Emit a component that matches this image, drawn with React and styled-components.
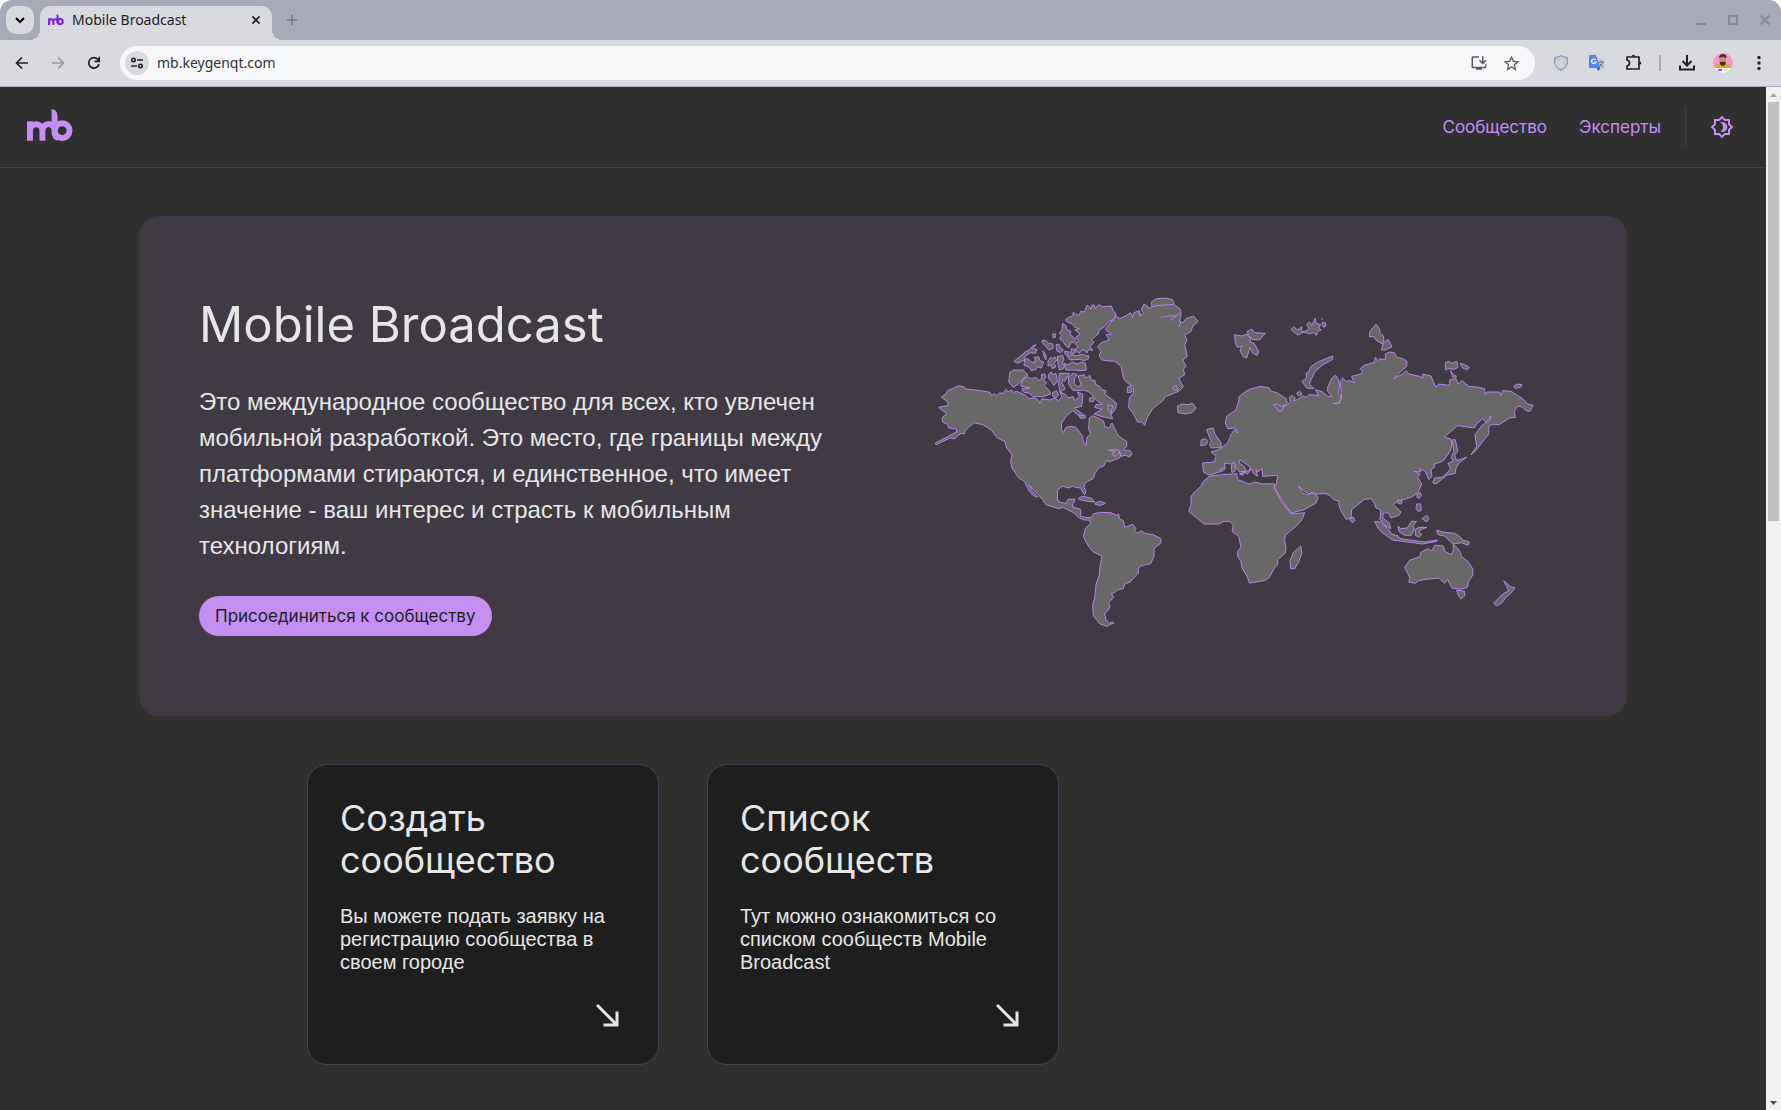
import React from 'react';
import styled, { createGlobalStyle } from 'styled-components';
import { MdOutlineInstallDesktop, MdStarBorder, MdSouthEast, MdOutlineBrightness4 } from 'react-icons/md';

const sans = '"Liberation Sans", Arial, sans-serif';
const chromeFont = '"Noto Sans", "Open Sans", sans-serif';
const display = 'Inter, "Noto Sans", sans-serif';

const GlobalStyle = createGlobalStyle`
  *, *::before, *::after { box-sizing: border-box; }
  body { margin: 0; background: #ffffff; font-family: ${sans}; }
  h1, h2, p { margin: 0; font-weight: 400; }
  a { color: inherit; text-decoration: none; }
  button { border: 0; padding: 0; background: none; font: inherit; color: inherit; cursor: pointer; }
  svg { display: block; flex: none; }
`;

const Window = styled.div`
  display: flex;
  flex-direction: column;
  height: 100vh;
  overflow: hidden;
`;

const TabStrip = styled.div`
  display: flex;
  align-items: center;
  flex: none;
  height: 40px;
  padding-left: 6px;
  background: #a8aab7;
  border-radius: 12px 12px 0 0;
`;

const TabSearch = styled.button`
  display: grid;
  place-items: center;
  width: 28px;
  height: 28px;
  margin-right: 6px;
  border-radius: 10px;
  background: #d9dae0;
`;

const Tab = styled.div`
  position: relative;
  display: flex;
  align-items: center;
  align-self: flex-end;
  width: 232px;
  height: 34px;
  padding: 0 6px 6px 8px;
  border-radius: 10px 10px 0 0;
  background: #d9dae0;
  color: #1f2023;
  font: 14px/20px ${chromeFont};

  &::before, &::after {
    content: '';
    position: absolute;
    bottom: 0;
    width: 10px;
    height: 10px;
  }
  &::before { right: 100%; background: radial-gradient(circle at 0 0, transparent 10px, #d9dae0 10px); }
  &::after { left: 100%; background: radial-gradient(circle at 100% 0, transparent 10px, #d9dae0 10px); }
`;

const TabTitle = styled.span`
  flex: 1;
  padding-left: 8px;
`;

const IconButton = styled.button`
  display: grid;
  place-items: center;
  flex: none;
  width: ${(p) => p.$size || 36}px;
  height: ${(p) => p.$size || 36}px;
  color: ${(p) => p.$color || '#1f2023'};
`;

const WindowControls = styled.div`
  display: flex;
  margin-left: auto;
`;

const Toolbar = styled.div`
  display: flex;
  align-items: center;
  flex: none;
  height: 47px;
  padding: 0 4px;
  border-bottom: 1px solid #a8aab7;
  background: #d9dae0;
`;

const AddressBar = styled.label`
  display: flex;
  align-items: center;
  flex: 1;
  height: 34px;
  margin: 0 8px;
  padding: 0 8px 0 5px;
  border-radius: 17px;
  background: #f5f7f9;
  color: #5a5c60;
`;

const SiteChip = styled.span`
  display: grid;
  place-items: center;
  width: 24px;
  height: 24px;
  border-radius: 50%;
  background: #d9dae0;
`;

const AddressInput = styled.input`
  flex: 1;
  min-width: 0;
  padding: 0 0 0 8px;
  border: 0;
  outline: 0;
  background: transparent;
  color: #303236;
  font: 14px/20px ${chromeFont};
`;

const ToolbarDivider = styled.span`
  width: 2px;
  height: 16px;
  margin: 0 8px;
  background: #a8aab7;
`;

const Viewport = styled.div`
  display: flex;
  flex: 1;
  min-height: 0;
`;

const Page = styled.div`
  flex: 1;
  min-width: 0;
  overflow: hidden;
  background: #303030;
  color: #e6e6e6;
`;

const Header = styled.header`
  display: flex;
  align-items: center;
  justify-content: space-between;
  height: 81px;
  padding: 0 32px 0 27px;
  border-bottom: 1px solid #43404a;
  color: #c58ff2;
`;

const HomeLink = styled.a`
  padding-bottom: 4px;
`;

const Nav = styled.nav`
  display: flex;
  align-items: center;
  gap: 32px;
  font: 17px/24px ${display};
`;

const NavActions = styled.div`
  display: flex;
  align-items: center;
  height: 40px;
  margin-left: -8px;
  padding-left: 24px;
  border-left: 1px solid #43404a;
`;

const Main = styled.main`
  display: flex;
  flex-direction: column;
  align-items: center;
  gap: 48px;
  padding-top: 48px;
`;

const Hero = styled.section`
  display: grid;
  grid-template-columns: 1fr 1fr;
  align-items: center;
  gap: 40px;
  width: calc(100% - 278px);
  padding: 80px 60px;
  border-radius: 20px;
  background: #403a44;
`;

const HeroCopy = styled.div`
  display: flex;
  flex-direction: column;
  align-items: flex-start;
`;

const HeroTitle = styled.h1`
  font: 400 49px/55px ${display};
`;

const HeroText = styled.p`
  padding: 32px 0;
  font-size: 24px;
  line-height: 36px;
`;

const JoinLink = styled.a`
  padding: 8px 16px;
  border-radius: 20px;
  background: #c58ff2;
  color: #1e1e1e;
  font: 17px/24px ${display};
`;

const WorldMap = styled.svg`
  justify-self: center;
  width: 100%;
  max-width: 602px;
  fill: #686868;
  stroke: #b884e6;
  stroke-width: 3;
  stroke-linejoin: round;
`;

const CardGrid = styled.section`
  display: grid;
  grid-template-columns: repeat(3, 1fr);
  gap: 48px;
  width: 100%;
  max-width: 1152px;
`;

const Card = styled.a`
  display: flex;
  flex-direction: column;
  gap: 24px;
  padding: 32px 32px 30px;
  border: 1px solid #493f54;
  border-radius: 20px;
  background: #1e1e1e;
`;

const CardTitle = styled.h2`
  font: 400 36px/42px ${display};
`;

const CardText = styled.p`
  font-size: 20px;
  line-height: 23px;
`;

const CardArrow = styled.span`
  align-self: flex-end;
`;

const ScrollTrack = styled.div`
  display: flex;
  flex-direction: column;
  align-items: center;
  flex: none;
  width: 15px;
  background: #f1f1f1;
`;

const ScrollArrow = styled.span`
  display: grid;
  place-items: center;
  flex: none;
  height: 15px;
`;

const ScrollThumb = styled.div`
  width: 11px;
  height: 41%;
  background: #c1c1c1;
`;

const Spacer = styled.div`
  flex: 1;
`;

function Logo({ width, color }) {
  return (
    <svg width={width} viewBox="80 326 140 98" fill="none" stroke={color} strokeWidth="18" aria-hidden="true">
      <path d="M89 423V363M89 395C89 365 127 365 127 395V423M127 395C127 366 158 366 164 386" />
      <path d="M155 326Q173 328 173 348V423Q155 416 155 398Z" fill={color} stroke="none" />
      <circle cx="187" cy="392" r="22.5" />
    </svg>
  );
}

function Stroke({ size = 20, width = 2, children }) {
  return (
    <svg width={size} height={size} viewBox="0 0 20 20" fill="none" stroke="currentColor" strokeWidth={width} aria-hidden="true">
      {children}
    </svg>
  );
}

function ShieldIcon() {
  return (
    <svg width="14" height="16" viewBox="0 0 14 16" fill="none" stroke="#8d98a8" aria-hidden="true">
      <path d="M7 .6Q10 2.3 13.4 2.4V8Q13 13 7 15.5Q1 13 .6 8V2.4Q4 2.3 7 .6Z" fill="#b7becb" />
      <circle cx="7" cy="7.500" r="4.300" stroke="#edf0f4" />
      <path d="M8.800 6.200A2.200 2.200 0 1 0 9 8.800L6.800 7.600L10 4.500" stroke="#edf0f4" />
    </svg>
  );
}

function TranslateIcon() {
  return (
    <svg width="16" height="16" viewBox="0 0 16 16" fill="none" aria-hidden="true">
      <path d="M6 3H15Q16 3 16 4V14Q16 15 15 15H9Z" fill="#cfd1d6" />
      <path d="M1 0H7L11.500 13H1Q0 13 0 12V1Q0 0 1 0Z" fill="#4f83ee" />
      <path d="M8 13H11.500L9 16Z" fill="#3451b8" />
      <path d="M6.800 5A2.300 2.300 0 1 0 7.100 7H5" stroke="#fff" strokeWidth="1.200" />
      <path d="M9.500 7H15M12 5.500V7M14 7Q13 10 10.500 11.500M11 8.500Q12.500 11 14.500 12" stroke="#56707c" />
    </svg>
  );
}

function Avatar() {
  return (
    <svg width="20" height="20" viewBox="0 0 20 20" aria-hidden="true">
      <clipPath id="avatar"><circle cx="10" cy="10" r="10" /></clipPath>
      <g clipPath="url(#avatar)">
        <path fill="#f19ac2" d="M0 0H20V20H0Z" />
        <path fill="#d8aa20" d="M2 15Q3 11 8 11H12Q17 11 18 15Z" />
        <path fill="#c89070" d="M6.500 3H13V10Q10 14 6.500 10Z" />
        <path fill="#4b3028" d="M6 4.500Q6.500 1 10 1Q13.500 1 13.500 4.500L13 5Q9 3 6.500 5ZM6.500 9Q10 8.500 13 9L12 12Q10 13.500 7.500 12Z" />
        <path fill="#fff" d="M0 15H20V20H0Z" />
        <path fill="#9648e8" d="M5 16H9V18H5Z" />
        <path fill="#c9c6d0" d="M10 16.500H15V17.500H10Z" />
      </g>
    </svg>
  );
}

/* Northern islands of Canada */
const arcticIslands = [
  'M438 116L448 108L460 103L462 92L468 98L480 102L484 90L495 92L503 72L510 76L515 84L518 72L524 70L528 82L534 74L540 70L550 76L576 74L581 88L590 98L585 112L570 120L556 136L540 146L536 158L526 166L516 176L524 182L512 196L520 208L508 204L502 216L496 206L486 208L480 216L474 212L466 205L476 196L466 186L478 178L470 168L482 158L467 146L480 142L466 138L460 128L446 122Z',
  'M430 126L440 134L442 144L455 150L452 160L470 174L462 184L455 182L448 200L438 192L430 178L422 174L426 162L420 156L428 145Z',
  'M350 190L338 196L330 206L318 212L284 240L296 246L316 235L318 224L334 214L348 216L353 204L340 202Z',
  'M316 236L326 232L336 242L348 244L346 228L358 226L362 238L373 242L366 260L354 256L350 264L336 268L330 258L314 252Z',
  'M370 176L380 178L388 186L400 188L402 200L388 206L378 194L368 182Z',
  'M400 158L409 158L408 168L401 169Z',
  'M371 208L376 216L381 224L379 236L374 224Z',
  'M410 190L418 188L424 200L432 206L424 214L412 208Z',
  'M436 210L450 212L446 222L438 220ZM456 202L466 204L468 214L454 218Z',
  'M386 240L394 228L400 232L406 226L412 236L404 246L410 256L398 262L396 250L386 254Z',
  'M414 226L430 222L434 236L428 246L436 252L432 262L420 266L416 246Z',
  'M444 226L458 220L470 224L490 218L500 224L508 222L508 232L496 238L480 234L452 236Z',
  'M434 246L446 250L460 242L474 248L488 242L498 246L501 266L484 268L466 266L440 266Z',
  'M272 272L284 266L312 266L316 272L326 280L314 290L300 306L282 318L268 302Z',
  'M310 296L324 286L334 292L350 288L358 298L368 290L366 280L376 278L380 288L372 296L382 304L374 312L390 328L394 338L370 346L342 346L330 336L312 332L308 322L332 320L304 314Z',
  'M388 278L396 272L400 280L410 276L414 300L404 312L398 302L388 292Z',
  'M400 334L412 328L418 342L410 350L400 344Z',
  'M420 276L450 276L442 290L436 300L430 294L428 306L438 322L422 332L418 308Z',
  'M448 286L462 276L474 280L466 290L464 306L474 316L486 312L476 284L494 280L500 290L512 282L516 298L526 296L530 310L540 314L546 324L560 328L556 338L572 350L592 366L588 384L576 398L566 386L566 370L580 374L574 398L580 412L548 406L524 398L548 384L526 378L530 370L550 368L534 360L522 344L510 332L494 326L476 328L460 326L448 308Z',
  'M511 350L520 347L525 355L520 362L510 359ZM476 400L488 404L496 400L498 410L484 411Z',
];

const americas = [
  'M66 347L80 338L84 328L100 322L118 313L135 317L140 323L185 328L212 333L217 343L225 336L232 343L240 335L252 336L260 324L266 332L276 326L282 333L292 330L318 342L330 352L345 349L358 358L362 366L368 352L392 356L405 350L418 358L428 346L422 332L436 338L448 350L462 346L466 358L480 346L474 332L490 338L490 352L487 375L465 380L490 398L487 408L475 400L460 388L440 405L427 425L426 445L433 454L440 438L455 435L470 438L480 452L490 465L492 482L500 493L503 468L514 458L508 445L510 410L520 403L540 412L553 420L556 436L568 440L578 425L585 440L596 462L606 470L622 480L622 496L612 504L622 508L632 508L638 518L630 527L618 522L606 525L600 512L588 526L578 518L588 512L568 506L590 505L600 507L604 525L600 530L568 542L564 535L552 555L540 558L527 575L522 592L505 600L496 608L494 618L500 630L496 640L490 632L484 620L468 618L460 614L450 620L430 615L415 625L414 652L418 662L440 666L446 654L466 653L466 662L460 666L460 677L484 684L484 705L498 708L516 710L522 698L540 693L575 694L592 702L598 698L600 712L612 718L616 738L633 732L640 728L650 742L645 748L655 755L665 748L678 756L702 760L725 772L724 785L704 802L704 825L694 847L665 853L657 862L657 875L632 902L616 908L612 922L592 926L586 934L576 936L583 948L568 964L572 976L565 988L556 998L560 1015L570 1026L580 1022L584 1026L572 1029L564 1035L542 1028L522 1003L520 970L526 950L530 910L540 880L542 855L548 825L520 810L510 798L498 778L492 765L498 742L514 725L510 716L495 716L480 710L462 693L430 678L418 682L380 670L370 655L345 628L328 610L338 628L355 647L346 646L330 630L315 600L298 590L278 560L274 540L278 520L262 500L256 480L235 470L215 445L190 430L165 424L150 436L138 446L135 458L125 456L105 472L92 470L50 490L48 485L90 463L112 452L112 443L88 440L85 430L70 422L68 410L82 397L62 382L58 378L88 372L85 362Z',
  'M590 104L602 112L618 104L634 94L640 108L644 94L660 88L664 104L672 94L666 86L674 68L684 74L688 82L698 76L696 62L712 52L742 50L760 56L765 70L784 84L785 100L780 120L790 125L800 112L822 104L836 120L820 136L814 152L796 160L803 178L796 190L804 226L790 236L800 254L792 264L796 280L778 292L792 316L778 330L738 346L730 358L700 382L684 408L676 432L668 422L655 422L640 394L628 378L630 350L642 336L642 316L624 305L612 290L606 256L586 240L548 236L540 224L545 208L534 196L546 184L570 176L560 160L576 158L558 144Z',
  'M724 108Q748 102 770 104M752 118L770 104L784 94M698 76Q720 70 765 70M785 120L779 137M655 88L662 104M760 320L770 312L776 326L764 326ZM624 318L634 314L638 332L624 334Z',
  'M774 374L788 368L806 370L820 366L830 380L818 394L800 398L776 394Z',
  'M478 650L490 645L516 650L526 662L504 660L480 655ZM528 664L544 660L558 666L544 672L528 670Z',
  'M484 148L474 136M500 170L502 148L508 124M490 148L505 142M470 166L490 172M536 140L552 134L560 124M564 118L584 116',
];

/* Europe, Asia and the Russian Arctic */
const eurasia = [
  'M215 315L240 320L242 328L265 335L290 352L294 365L285 372L278 388L268 390L262 380L252 370L265 368L275 375L292 372L303 362L300 348L306 342L318 350L312 358L325 355L340 343L350 348L358 340L388 342L378 325L400 332L415 345L428 345L415 330L415 318L428 290L438 282L446 292L450 310L448 340L458 345L452 360L445 368L432 366L450 365L455 350L455 325L452 300L460 290L470 300L482 298L495 305L487 285L515 278L520 270L513 262L525 252L555 243L558 228L566 238L572 232L588 236L588 218L600 212L615 214L622 228L640 232L653 240L652 255L635 270L613 292L640 278L650 268L660 278L690 285L700 290L700 278L725 284L732 302L740 318L748 308L780 312L782 295L800 292L806 308L818 298L838 315L868 318L885 322L888 340L892 332L930 332L934 342L940 328L965 330L1000 352L1015 368L1032 372L1022 390L1010 388L1000 378L985 374L975 390L978 408L960 410L930 430L905 430L898 440L898 460L888 470L862 505L845 520L862 496L857 460L880 430L900 420L905 404L890 424L880 412L860 430L855 440L805 433L765 467L785 474L788 490L782 510L765 535L755 542L735 548L735 558L725 565L728 585L718 595L708 570L690 562L695 572L675 570L692 578L685 588L697 608L685 635L665 648L625 660L612 670L635 692L628 702L605 710L598 695L582 695L580 710L600 725L604 742L585 730L572 715L574 685L560 680L555 665L545 652L525 654L487 685L485 710L470 714L450 678L448 658L435 656L420 642L410 637L375 638L370 632L360 638L345 630L328 614L340 635L352 640L375 634L386 648L380 665L345 685L305 695L280 660L255 618L262 605L265 582L220 585L218 562L205 572L200 565L205 585L192 576L186 562L175 578L162 572L178 568L184 558L152 535L150 545L165 556L170 570L150 572L135 550L125 548L105 545L108 560L90 572L60 582L42 572L40 545L75 542L80 525L65 512L80 508L95 500L115 485L125 460L135 445L145 455L138 440L115 442L108 425L112 405L140 385L148 360L150 345L170 330L185 322Z',
  'M52 444L72 440L76 458L85 470L95 484L95 498L66 500L60 490L66 480L58 462ZM36 476L48 472L56 480L50 490L34 493Z',
  'M90 566L104 558L108 562L94 572ZM128 546L136 544L138 568L128 574L126 560ZM150 578L166 572L160 582Z',
  'M136 160L158 164L172 158L184 172L182 182L194 186L208 210L204 222L190 216L182 198L172 230L162 226L152 208L158 194L144 198L138 186ZM173 150L188 144L195 154L228 156L210 176L188 174L178 162Z',
  'M305 144L314 136L324 146L338 136L336 148L345 152L360 142L352 130L360 122L368 132L378 110L380 126L394 130L388 140L396 146L384 150L382 162L372 154L360 158L344 152L326 161L310 150ZM398 124L408 124L410 134L402 138ZM396 110L400 116',
  'M430 224L430 234L398 252L376 272L366 294L360 308L374 322L352 320L338 300L352 290L350 276L358 272L364 256L390 240Z',
  'M560 129L570 142L572 154L582 164L584 176L580 188L562 178L554 166L540 166L542 150ZM596 174L608 196L588 206L576 206L582 186Z',
  'M768 244L778 240L788 246L802 240L806 258L794 264L776 262L768 266ZM812 246L826 250L840 258L834 265L820 260ZM784 268L790 278L802 286L790 288Z',
  'M972 316L984 308L998 310L994 318L978 321ZM322 336L332 330L338 338L328 344Z',
  'M788 476L798 475L805 510L796 522L802 538L832 528L808 546L800 560L798 576L772 582L740 608L730 604L736 590L758 588L776 572L784 562L776 546L792 540L786 528L794 510Z',
];

/* Africa, South-East Asia and Oceania */
const south = [
  'M90 105L130 100L172 97L175 115L210 128L225 122L250 128L285 127L285 140L305 180L330 210L335 218L376 214L368 235L350 255L318 282L316 300L320 320L318 335L295 355L295 370L285 380L270 408L255 418L210 425L203 405L188 380L185 360L175 345L175 330L185 318L178 285L158 270L162 250L150 240L135 240L118 248L75 248L55 232L28 210L35 190L35 165L50 148L65 135L72 120Z',
  'M364 314L368 334L358 362L346 382L334 382L332 358L342 334Z',
  'M515 228L522 228L526 238L520 244L512 238Z',
  'M586 240L602 242L628 264L636 278L656 284L662 292L735 302L774 296L772 300L730 308L640 296L606 272L596 260Z',
  'M656 254L664 262L684 260L696 240L712 240L702 252L704 266L696 282L676 282L660 272ZM708 264L718 258L742 258L722 266L720 274L728 280L718 288L708 282Z',
  'M655 176L668 177L666 188L656 186ZM714 158L724 154L726 162L718 172L712 166ZM712 188L724 188L726 206L718 211L710 202ZM728 232L742 222L749 232L742 242Z',
  'M772 266L788 272L826 276L842 286L850 296L870 302L866 312L846 304L820 308L796 284L776 280Z',
  'M822 308L832 318L844 334L846 346L866 360L881 384L880 402L868 420L864 438L844 444L818 440L804 414L796 426L778 410L740 414L718 418L708 426L688 422L692 410L676 378L692 356L722 346L724 334L744 322L758 328L766 312L792 314L796 330L816 340L822 326Z',
  'M832 446L856 450L856 464L844 472L836 460Z',
  'M973 418L994 436L1007 440L994 456L980 468L968 484L952 494L943 486L960 468L976 454L988 450L982 434Z',
];

function Land({ paths, ...rest }) {
  return (
    <g {...rest}>
      {paths.map((d) => <path key={d} d={d} />)}
    </g>
  );
}

const cards = [
  { title: 'Создать сообщество', text: 'Вы можете подать заявку на регистрацию сообщества в своем городе' },
  { title: 'Список сообществ', text: 'Тут можно ознакомиться со списком сообществ Mobile Broadcast' },
];

export default function App() {
  return (
    <Window>
      <GlobalStyle />
      <TabStrip>
        <TabSearch aria-label="Search tabs">
          <Stroke size={16}><path d="M5 7.500L10 12.500L15 7.500" strokeWidth="2.500" /></Stroke>
        </TabSearch>
        <Tab>
          <Logo width={16} color="#7c22e8" />
          <TabTitle>Mobile Broadcast</TabTitle>
          <IconButton $size={20} aria-label="Close tab">
            <Stroke size={16}><path d="M5.500 5.500L14.500 14.500M14.500 5.500L5.500 14.500" /></Stroke>
          </IconButton>
        </Tab>
        <IconButton $size={40} $color="#777985" aria-label="New tab">
          <Stroke size={16}><path d="M10 3.500V16.500M3.500 10H16.500" /></Stroke>
        </IconButton>
        <WindowControls>
          <IconButton $size={32} $color="#878996" aria-label="Minimize">
            <Stroke><path d="M5 14H15" /></Stroke>
          </IconButton>
          <IconButton $size={32} $color="#878996" aria-label="Maximize">
            <Stroke><path d="M6 6H14V14H6Z" /></Stroke>
          </IconButton>
          <IconButton $size={32} $color="#878996" aria-label="Close">
            <Stroke><path d="M5.500 5.500L14.500 14.500M14.500 5.500L5.500 14.500" /></Stroke>
          </IconButton>
        </WindowControls>
      </TabStrip>

      <Toolbar>
        <IconButton aria-label="Back"><Stroke width={1.7}><path d="M16 10H5M10 4.500L4.500 10L10 15.500" /></Stroke></IconButton>
        <IconButton $color="#97989d" aria-label="Forward"><Stroke width={1.7}><path d="M4 10H15M10 4.500L15.500 10L10 15.500" /></Stroke></IconButton>
        <IconButton aria-label="Reload">
          <Stroke width={1.7}><path d="M15 11A5.200 5.200 0 1 1 13.700 6.300L15 7.700M15.200 3.800V8.300H10.500" /></Stroke>
        </IconButton>
        <AddressBar>
          <SiteChip>
            <svg width="14" height="14" viewBox="0 0 14 14" fill="none" stroke="#1f2023" strokeWidth="1.600" aria-hidden="true">
              <circle cx="3.500" cy="4" r="1.700" /><circle cx="10.500" cy="10" r="1.700" />
              <path d="M7 4H13M1 10H7" />
            </svg>
          </SiteChip>
          <AddressInput type="text" aria-label="Address" defaultValue="mb.keygenqt.com" />
          <IconButton $size={32} $color="#5a5c60" aria-label="Install app"><MdOutlineInstallDesktop size={18} /></IconButton>
          <IconButton $size={32} $color="#5a5c60" aria-label="Bookmark"><MdStarBorder size={19} /></IconButton>
        </AddressBar>
        <IconButton aria-label="Shield"><ShieldIcon /></IconButton>
        <IconButton aria-label="Translate"><TranslateIcon /></IconButton>
        <IconButton aria-label="Extensions">
          <Stroke width={1.7}>
            <path d="M4 4H16V16H4V13Q6.500 12.500 6.500 10Q6.500 7.500 4 7Z" strokeLinejoin="round" />
            <path d="M8.500 3.500a1.800 1.800 0 0 1 3.600 0ZM16.500 8.200a1.800 1.800 0 0 1 0 3.600Z" fill="currentColor" stroke="none" />
          </Stroke>
        </IconButton>
        <ToolbarDivider />
        <IconButton aria-label="Downloads">
          <Stroke><path d="M10 2V12M5.500 8L10 12.500L14.500 8M3 12.500V16.500H17V12.500" /></Stroke>
        </IconButton>
        <IconButton aria-label="Profile"><Avatar /></IconButton>
        <IconButton aria-label="Menu">
          <svg width="4" height="16" viewBox="0 0 4 16" fill="currentColor" aria-hidden="true">
            <circle cx="2" cy="2.500" r="1.700" /><circle cx="2" cy="8" r="1.700" /><circle cx="2" cy="13.500" r="1.700" />
          </svg>
        </IconButton>
      </Toolbar>

      <Viewport>
        <Page>
          <Header>
            <HomeLink href="#home" aria-label="Mobile Broadcast"><Logo width={46} color="#c58ff2" /></HomeLink>
            <Nav>
              <a href="#community">Сообщество</a>
              <a href="#experts">Эксперты</a>
              <NavActions>
                <IconButton $size={24} $color="#c58ff2" aria-label="Theme"><MdOutlineBrightness4 size={24} /></IconButton>
              </NavActions>
            </Nav>
          </Header>
          <Main>
            <Hero>
              <HeroCopy>
                <HeroTitle>Mobile Broadcast</HeroTitle>
                <HeroText>
                  Это международное сообщество для всех, кто увлечен мобильной разработкой. Это место, где границы между
                  платформами стираются, и единственное, что имеет значение - ваш интерес и страсть к мобильным технологиям.
                </HeroText>
                <JoinLink href="#join">Присоединиться к сообществу</JoinLink>
              </HeroCopy>
              <WorldMap viewBox="44 44 1806 1020" aria-hidden="true">
                <Land paths={americas} />
                <Land paths={arcticIslands} />
                <Land paths={eurasia} transform="translate(810 0)" />
                <Land paths={south} transform="translate(780 480)" />
              </WorldMap>
            </Hero>
            <CardGrid>
              {cards.map((card) => (
                <Card key={card.title} href="#card">
                  <CardTitle>{card.title}</CardTitle>
                  <CardText>{card.text}</CardText>
                  <CardArrow><MdSouthEast size={36} /></CardArrow>
                </Card>
              ))}
            </CardGrid>
          </Main>
        </Page>
        <ScrollTrack aria-hidden="true">
          <ScrollArrow><svg width="7" height="4" viewBox="0 0 7 4"><path d="M0 4L3.500 0L7 4Z" fill="#a3a3a3" /></svg></ScrollArrow>
          <ScrollThumb />
          <Spacer />
          <ScrollArrow><svg width="7" height="4" viewBox="0 0 7 4"><path d="M0 0L3.500 4L7 0Z" fill="#505050" /></svg></ScrollArrow>
        </ScrollTrack>
      </Viewport>
    </Window>
  );
}
